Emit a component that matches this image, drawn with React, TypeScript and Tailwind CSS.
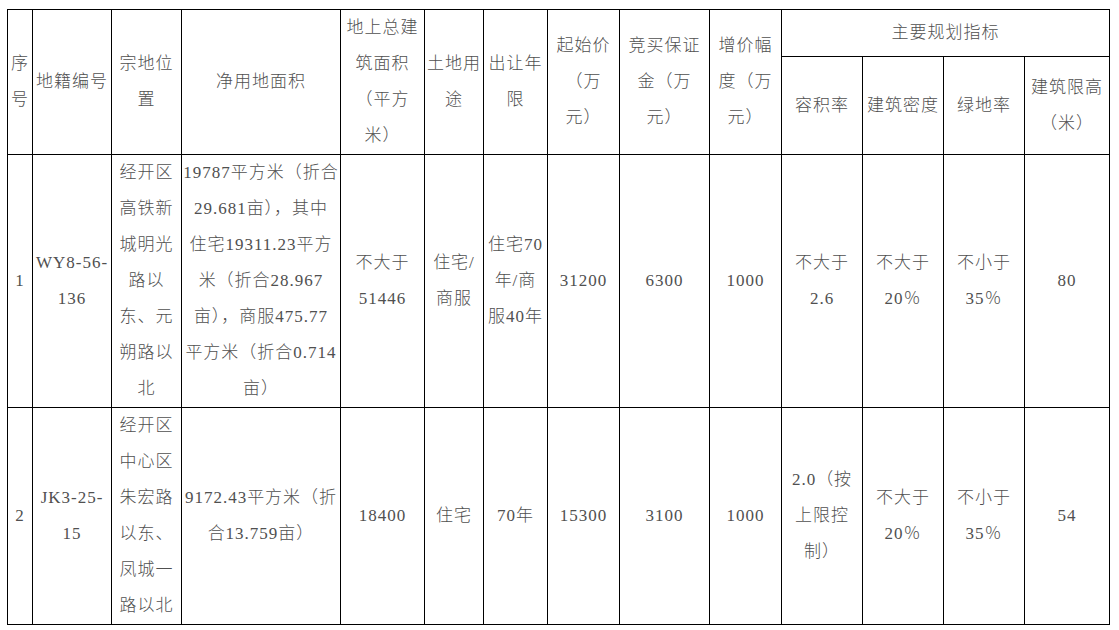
import type { ReactNode } from "react";

const widths = [25, 79, 70, 159, 84, 59, 64, 72, 90, 72, 81, 81, 81, 85];

interface CellProps {
  lines: ReactNode[];
  rowSpan?: number;
  colSpan?: number;
}

const Cell = ({ lines, rowSpan, colSpan }: CellProps) => (
  <td
    rowSpan={rowSpan}
    colSpan={colSpan}
    className="border border-black p-0 text-center align-middle whitespace-nowrap overflow-hidden"
  >
    {lines.map((l, i) => (
      <div key={i}>{l}</div>
    ))}
  </td>
);

const rows: string[][][] = [
  [
    ["1"],
    ["WY8-56-", "136"],
    ["经开区", "高铁新", "城明光", "路以", "东、元", "朔路以", "北"],
    [
      "19787平方米（折合",
      "29.681亩），其中",
      "住宅19311.23平方",
      "米（折合28.967",
      "亩），商服475.77",
      "平方米（折合0.714",
      "亩）",
    ],
    ["不大于", "51446"],
    ["住宅/", "商服"],
    ["住宅70", "年/商", "服40年"],
    ["31200"],
    ["6300"],
    ["1000"],
    ["不大于", "2.6"],
    ["不大于", "20％"],
    ["不小于", "35％"],
    ["80"],
  ],
  [
    ["2"],
    ["JK3-25-", "15"],
    ["经开区", "中心区", "朱宏路", "以东、", "凤城一", "路以北"],
    ["9172.43平方米（折", "合13.759亩）"],
    ["18400"],
    ["住宅"],
    ["70年"],
    ["15300"],
    ["3100"],
    ["1000"],
    ["2.0（按", "上限控", "制）"],
    ["不大于", "20％"],
    ["不小于", "35％"],
    ["54"],
  ],
];

export default function App() {
  return (
    <div className="w-[1119px] h-[630px] bg-white pt-[9px] pl-[7px] overflow-hidden">
      <table
        className="border-collapse table-fixed w-[1102px] text-[17px] leading-[36px] tracking-[1px] font-light text-[#505050]"
        style={{ fontFamily: "'Liberation Serif', 'Noto Sans CJK SC', serif" }}
      >
        <colgroup>
          {widths.map((w, i) => (
            <col key={i} style={{ width: w }} />
          ))}
        </colgroup>
        <tbody>
          <tr className="h-[47px]">
            <Cell rowSpan={2} lines={["序", "号"]} />
            <Cell rowSpan={2} lines={["地籍编号"]} />
            <Cell rowSpan={2} lines={["宗地位", "置"]} />
            <Cell rowSpan={2} lines={["净用地面积"]} />
            <Cell rowSpan={2} lines={["地上总建", "筑面积", "（平方", "米）"]} />
            <Cell rowSpan={2} lines={["土地用", "途"]} />
            <Cell rowSpan={2} lines={["出让年", "限"]} />
            <Cell rowSpan={2} lines={["起始价", "（万", "元）"]} />
            <Cell rowSpan={2} lines={["竞买保证", "金（万", "元）"]} />
            <Cell rowSpan={2} lines={["增价幅", "度（万", "元）"]} />
            <Cell colSpan={4} lines={["主要规划指标"]} />
          </tr>
          <tr className="h-[97px]">
            <Cell lines={["容积率"]} />
            <Cell lines={["建筑密度"]} />
            <Cell lines={["绿地率"]} />
            <Cell lines={["建筑限高", "（米）"]} />
          </tr>
          <tr className="h-[253px]">
            {rows[0].map((c, i) => (
              <Cell key={i} lines={c} />
            ))}
          </tr>
          <tr className="h-[217px]">
            {rows[1].map((c, i) => (
              <Cell key={i} lines={c} />
            ))}
          </tr>
        </tbody>
      </table>
    </div>
  );
}
